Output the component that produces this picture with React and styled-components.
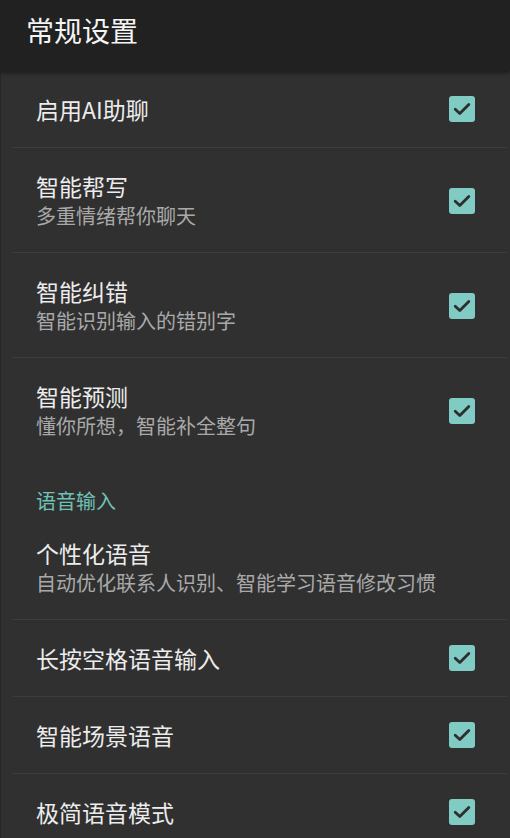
import React from 'react';
import styled, { createGlobalStyle } from 'styled-components';

const GlobalStyle = createGlobalStyle`
  html, body {
    margin:0;
    padding:0;
    background-color:#303030;
    font-family:"Noto Sans CJK SC", "Noto Sans", sans-serif;
  }
`;

const Page = styled.div`
  width:510px;
  height:838px;
  overflow:hidden;
  background-color:#303030;
  display:flex;
  flex-direction:column;
`;

const Header = styled.div`
  height:71px;
  flex-shrink:0;
  background-color:#212121;
  display:flex;
  align-items:flex-start;
  padding:11px 0 0 26px;
  box-sizing:border-box;
  box-shadow:0px 2px 4px rgba(0,0,0,0.45);
  position:relative;
  z-index:1;
`;

const HeaderTitle = styled.h1`
  margin:0;
  font-size:28px;
  line-height:38px;
  font-weight:400;
  color:#f4f4f4;
`;

const List = styled.div`
  display:flex;
  flex-direction:column;
  border-left:1px solid #272727;
`;

const Row = styled.div`
  display:flex;
  align-items:center;
  justify-content:space-between;
  padding:23px 35px 23px 35px;
  padding-bottom:${props => (props.summary ? '21px' : '23px')};
`;

const TextBlock = styled.div`
  display:flex;
  flex-direction:column;
`;

const Title = styled.div`
  font-size:23px;
  line-height:30px;
  color:#ececec;
`;

const Summary = styled.div`
  font-size:20px;
  line-height:30px;
  color:#a9a9a9;
`;

const Divider = styled.div`
  height:1px;
  margin:0 3px 0 11px;
  background-color:#3c3c3c;
`;

const SectionHeader = styled.div`
  padding:25px 35px 0 35px;
  font-size:20px;
  line-height:28px;
  color:#6fc0b5;
`;

const Box = styled.div`
  width:26px;
  height:26px;
  border-radius:3px;
  background-color:#80cbc4;
  display:flex;
  align-items:center;
  justify-content:center;
  flex-shrink:0;
`;

const Checkbox = () => (
  <Box>
    <svg width="20" height="20" viewBox="0 0 20 20">
      <path d="M3.2 10.2 L7.8 14.6 L16.8 5.6" fill="none" stroke="#2e2e2e" strokeWidth="2.8" strokeLinecap="round" strokeLinejoin="round" />
    </svg>
  </Box>
);

const Pref = ({ title, summary, checked, divider }) => (
  <>
    <Row summary={summary}>
      <TextBlock>
        <Title>{title}</Title>
        {summary && <Summary>{summary}</Summary>}
      </TextBlock>
      {checked && <Checkbox />}
    </Row>
    {divider && <Divider />}
  </>
);

export default function App() {
  return (
    <Page>
      <GlobalStyle />
      <Header>
        <HeaderTitle>常规设置</HeaderTitle>
      </Header>
      <List>
        <Pref title="启用AI助聊" checked divider />
        <Pref title="智能帮写" summary="多重情绪帮你聊天" checked divider />
        <Pref title="智能纠错" summary="智能识别输入的错别字" checked divider />
        <Pref title="智能预测" summary="懂你所想，智能补全整句" checked />
        <SectionHeader>语音输入</SectionHeader>
        <Pref title="个性化语音" summary="自动优化联系人识别、智能学习语音修改习惯" divider />
        <Pref title="长按空格语音输入" checked divider />
        <Pref title="智能场景语音" checked divider />
        <Pref title="极简语音模式" checked />
      </List>
    </Page>
  );
}
